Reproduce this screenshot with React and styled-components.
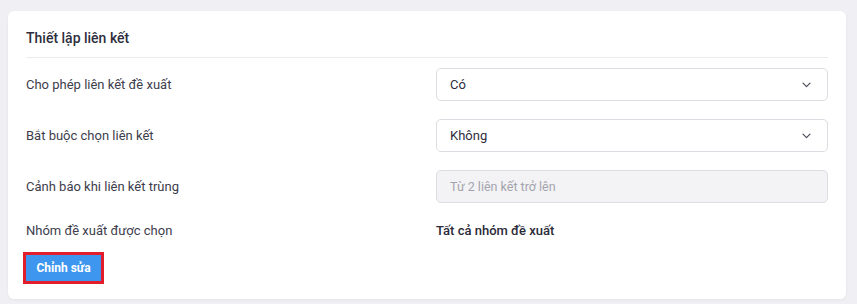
import React from "react";
import styled, { createGlobalStyle } from "styled-components";

const Global = createGlobalStyle`
  html, body { margin: 0; padding: 0; background: #f0f0f4; }
  body { font-family: Roboto, "Noto Sans", sans-serif; }
  * { box-sizing: border-box; }
`;

const Page = styled.div`
  padding: 11px 11px 5px 8px;
`;

const Card = styled.section`
  background: #fff;
  border-radius: 6px;
  box-shadow: 0 1px 3px rgba(30, 30, 60, 0.06);
  padding: 17px 18px 13px 18px;
  width: 838px;
  height: 288px;
`;

const Title = styled.h2`
  margin: 0;
  font-size: 14px;
  line-height: 20px;
  font-weight: 500;
  color: #2e2e3d;
  padding-bottom: 9px;
  border-bottom: 1px solid #ebebef;
`;

const Rows = styled.div`
  display: grid;
  grid-template-columns: 410px 1fr;
  row-gap: 18px;
  padding-top: 10px;
  align-items: center;
`;

const Label = styled.div`
  font-size: 13px;
  line-height: 20px;
  color: #3d3d4c;
`;

const Field = styled.div`
  height: 33px;
  border: 1px solid #dcdce2;
  border-radius: 5px;
  background: ${(p) => (p.$disabled ? "#f3f3f5" : "#fff")};
  display: flex;
  align-items: center;
  justify-content: space-between;
  padding: 0 16px 0 13px;
  font-size: ${(p) => (p.$disabled ? "12.5px" : "13px")};
  color: ${(p) => (p.$disabled ? "#a3a3ad" : "#2e2e3d")};
`;

const Value = styled.div`
  font-size: 13px;
  line-height: 20px;
  font-weight: 500;
  color: #2a2a38;
`;

const Actions = styled.div`
  padding-top: 11px;
  display: flex;
`;

const Highlight = styled.div`
  border: 3px solid #e31e2b;
  margin-left: -3px;
`;

const Button = styled.button`
  display: block;
  width: 75px;
  height: 26px;
  border: none;
  background: #3e96ef;
  color: #fff;
  font-family: Roboto, "Noto Sans", sans-serif;
  font-size: 12px;
  font-weight: 700;
  padding: 0;
  cursor: pointer;
`;

const Chevron = () => (
  <svg width="9" height="6" viewBox="0 0 9 6" fill="none">
    <path d="M1 1.2l3.5 3.5L8 1.2" stroke="#4a4a58" strokeWidth="1.2" strokeLinecap="round" strokeLinejoin="round" />
  </svg>
);

export default function App() {
  return (
    <>
      <Global />
      <Page>
        <Card>
          <Title>Thiết lập liên kết</Title>
          <Rows>
            <Label>Cho phép liên kết đề xuất</Label>
            <Field>
              <span>Có</span>
              <Chevron />
            </Field>
            <Label>Bắt buộc chọn liên kết</Label>
            <Field>
              <span>Không</span>
              <Chevron />
            </Field>
            <Label>Cảnh báo khi liên kết trùng</Label>
            <Field $disabled>
              <span>Từ 2 liên kết trở lên</span>
            </Field>
            <Label>Nhóm đề xuất được chọn</Label>
            <Value>Tất cả nhóm đề xuất</Value>
          </Rows>
          <Actions>
            <Highlight>
              <Button>Chỉnh sửa</Button>
            </Highlight>
          </Actions>
        </Card>
      </Page>
    </>
  );
}
